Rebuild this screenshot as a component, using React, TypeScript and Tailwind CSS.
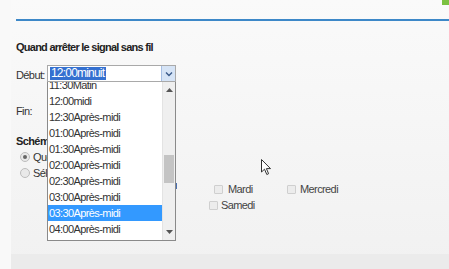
import React from "react";

const items = [
  "11:30Matin",
  "12:00midi",
  "12:30Après-midi",
  "01:00Après-midi",
  "01:30Après-midi",
  "02:00Après-midi",
  "02:30Après-midi",
  "03:00Après-midi",
  "03:30Après-midi",
  "04:00Après-midi",
  "04:30Après-midi",
];

function Checkbox() {
  return <span className="inline-block w-[9px] h-[9px] border border-[#cfcfcf] bg-[#ececec] rounded-[1px]" />;
}

function Radio({ checked }: { checked?: boolean }) {
  return (
    <span className="inline-flex items-center justify-center w-[10px] h-[10px] rounded-full border border-[#bdbdbd] bg-[#e9e9e9]">
      {checked && <span className="w-[4px] h-[4px] rounded-full bg-[#666]" />}
    </span>
  );
}

export default function App() {
  return (
    <div
      className="relative w-[449px] h-[269px] overflow-hidden bg-[#f5f5f5] text-[#333]"
      style={{ fontFamily: '"Liberation Sans", Arial, sans-serif' }}
    >
      <div className="absolute right-0 top-0 w-[7px] h-[5px] bg-[#7cc142]" />
      <div className="flex h-full">
        <div className="w-[11px] bg-[#f9f9f9]" />
        <div className="flex-1 flex flex-col bg-gradient-to-b from-[#fafafa] to-[#f1f1f1]">
          <div className="h-[19px]" />
          <div className="ml-[5px] h-[2px] bg-[#3d88c8]" />
          <div className="pl-[5px] flex flex-col text-[11px] tracking-[-0.6px]">
            <div className="mt-[19px] h-[14px] leading-[14px] font-bold text-[#222] tracking-[-0.75px]">Quand arrêter le signal sans fil</div>
            <div className="mt-[13px] h-[16px] leading-[16px]">Début:</div>
            <div className="mt-[20px] h-[16px] leading-[16px]">Fin:</div>
            <div className="mt-[15px] h-[14px] leading-[14px] font-bold text-[#222]">Schéma</div>
            <div className="mt-[1px] h-[16px] flex items-center gap-[3px] pl-[4px]">
              <Radio checked />
              <span>Quotidien</span>
            </div>
            <div className="h-[16px] flex items-center gap-[3px] pl-[4px]">
              <Radio />
              <span>Sélectionner</span>
            </div>
            <div className="h-[16px] flex items-center pl-[198px]">
              <span className="flex items-center gap-[5px] w-[73px]">
                <Checkbox />
                <span className="text-[#444]">Mardi</span>
              </span>
              <span className="flex items-center gap-[4px]">
                <Checkbox />
                <span className="text-[#444]">Mercredi</span>
              </span>
            </div>
            <div className="h-[16px] flex items-center pl-[193px]">
              <span className="flex items-center gap-[3px]">
                <Checkbox />
                <span className="text-[#444]">Samedi</span>
              </span>
            </div>
          </div>
          <div className="flex-1" />
          <div className="h-[15px] bg-[#ebebeb]" />
        </div>
      </div>

      {/* Dropdown list */}
      <div className="absolute left-[47px] top-[80px] w-[129px] h-[161px] border border-[#8a8a8a] border-t-0 bg-white overflow-hidden flex">
        <div className="flex-1 relative overflow-hidden">
          <div className="absolute left-0 right-0 top-[-3px] text-[11px] tracking-[-0.6px] text-[#333]">
            {items.map((t) => (
              <div
                key={t}
                className={
                  "h-[16px] leading-[16px] pl-[1px] " +
                  (t === "03:30Après-midi" ? "bg-[#3399ff] text-white" : "")
                }
              >
                {t}
              </div>
            ))}
          </div>
        </div>
        <div className="w-[13px] bg-[#efefef] border-l border-[#e3e3e3] flex flex-col items-center">
          <svg width="7" height="4" viewBox="0 0 7 4" className="mt-[8px]">
            <path d="M0 4 L3.5 0 L7 4 Z" fill="#555" />
          </svg>
          <div className="mt-[63px] w-[10px] h-[28px] bg-[#c4c4c4]" />
          <div className="flex-1" />
          <svg width="7" height="4" viewBox="0 0 7 4" className="mb-[6px]">
            <path d="M0 0 L3.5 4 L7 0 Z" fill="#555" />
          </svg>
        </div>
      </div>

      {/* Select box */}
      <div className="absolute left-[47px] top-[65px] w-[129px] h-[17px] border border-[#a9a9a9] bg-white flex items-center">
        <span className="ml-[2px] pl-[1px] pr-[2px] h-[13px] leading-[13px] text-[12px] tracking-[-0.8px] bg-[#3470d0] text-white">12:00minuit</span>
        <div className="ml-auto h-full w-[14px] bg-[#d6e4f6] border-l border-[#a6bfe4] flex items-center justify-center">
          <svg width="8" height="6" viewBox="0 0 8 6">
            <path d="M1 1.5 L4 4.5 L7 1.5" fill="none" stroke="#3a5a8a" strokeWidth="1.4" />
          </svg>
        </div>
      </div>
      <div className="absolute left-[176px] top-[183px] w-[1px] h-[6px] bg-[#4a6fb0]" />

      {/* Mouse cursor */}
      <svg className="absolute left-[261px] top-[159px]" width="11" height="17" viewBox="0 0 11 17">
        <path d="M0.5 0.5 L0.5 13 L3.5 10.2 L5.8 15.5 L7.6 14.7 L5.4 9.6 L9.5 9.6 Z" fill="#fff" stroke="#333" strokeWidth="1" strokeLinejoin="round" />
      </svg>
    </div>
  );
}
